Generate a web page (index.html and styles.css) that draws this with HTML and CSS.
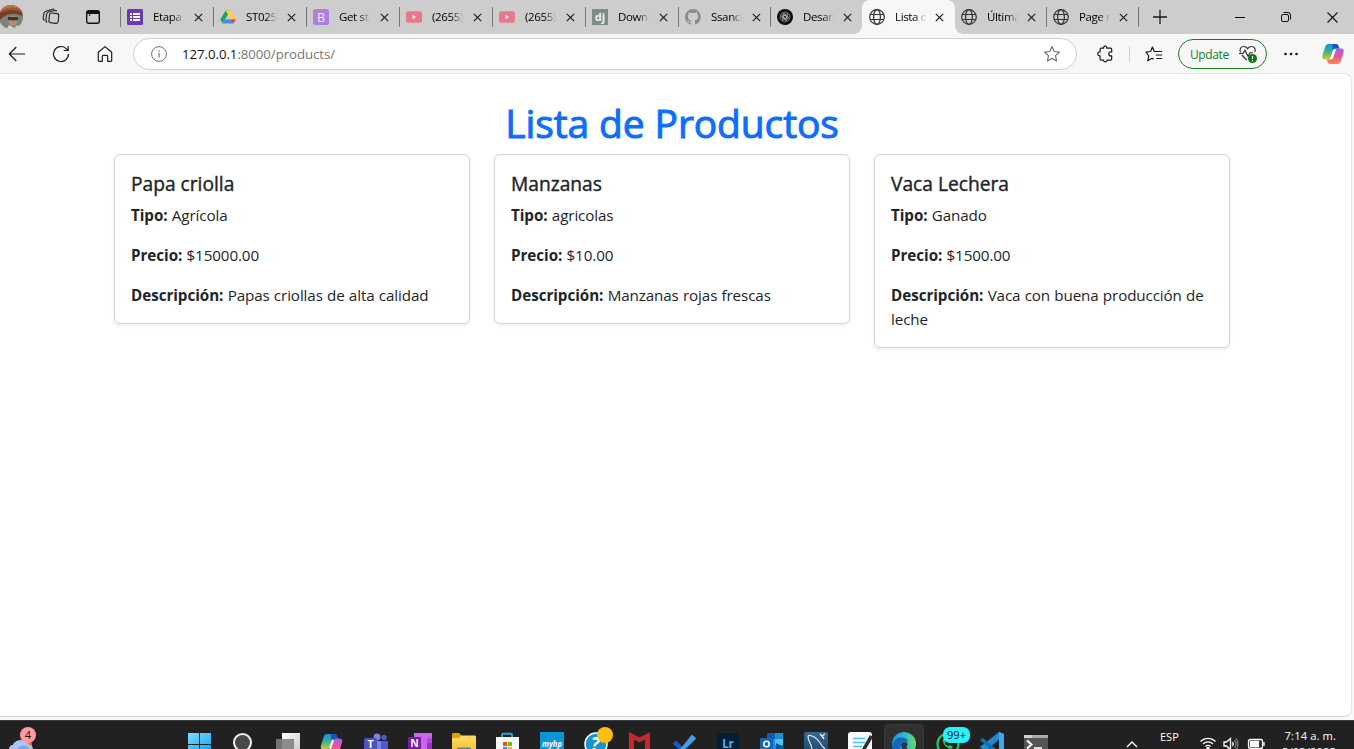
FILE: index.html
```html
<!DOCTYPE html>
<html lang="es">
<head>
<meta charset="utf-8">
<title>Lista de Productos</title>
<link rel="stylesheet" href="styles.css">
</head>
<body>
<svg class="defs" width="0" height="0" aria-hidden="true">
  <defs>
    <linearGradient id="cpA" x1="0" y1="0" x2="0" y2="1"><stop offset="0" stop-color="#1b8de6"/><stop offset=".5" stop-color="#35b58b"/><stop offset="1" stop-color="#f0c020"/></linearGradient>
    <linearGradient id="cpB" x1="0" y1="0" x2="0" y2="1"><stop offset="0" stop-color="#a65bea"/><stop offset=".5" stop-color="#e4559c"/><stop offset="1" stop-color="#ff8a4c"/></linearGradient>
    <linearGradient id="win" x1="0" y1="0" x2="1" y2="1"><stop offset="0" stop-color="#7fdcff"/><stop offset="1" stop-color="#19a5f2"/></linearGradient>
    <linearGradient id="edge" x1="0" y1="0" x2="1" y2="0"><stop offset="0" stop-color="#1b8fe0"/><stop offset=".5" stop-color="#2cb8d8"/><stop offset="1" stop-color="#69dc5c"/></linearGradient>
    <linearGradient id="tv" x1="0" y1="0" x2="1" y2="1"><stop offset="0" stop-color="#fff"/><stop offset="1" stop-color="#ccc"/></linearGradient>
    <linearGradient id="fold" x1="0" y1="0" x2="0" y2="1"><stop offset="0" stop-color="#ffdc6e"/><stop offset="1" stop-color="#fcc22e"/></linearGradient>
    <linearGradient id="sql" x1="0" y1="0" x2="0" y2="1"><stop offset="0" stop-color="#37688f"/><stop offset="1" stop-color="#1d4466"/></linearGradient>
    <clipPath id="face"><circle cx="11" cy="17" r="12"/></clipPath>
    <symbol id="x" viewBox="0 0 10 10"><path d="M.9.9l8.2 8.2M9.1.9L.9 9.1" stroke="#1b1b1b" stroke-width="1.3" fill="none"/></symbol>
    <symbol id="globe" viewBox="0 0 16 16"><g fill="none" stroke="#333" stroke-width="1.2"><circle cx="8" cy="8" r="7.3"/><ellipse cx="8" cy="8" rx="3.4" ry="7.3"/><path d="M1.3 5.5h13.4M1.3 10.5h13.4"/></g></symbol>
    <symbol id="yt" viewBox="0 0 16 16"><rect y="2.2" width="16" height="11.6" rx="2.6" fill="#e6798c"/><path d="M6.4 5.7v4.6l4-2.3z" fill="#f7e4e7"/></symbol>
    <symbol id="copilot" viewBox="0 0 24 22">
      <path d="M7.6 1h7.2c1.6 0 2.4 1 2.8 2.4l.7 2.2h-3.6c-1.7 0-2.5 1-3 2.6l-2 6.4c-.5 1.4-1.2 2-2.6 2H4.200C1.600 16.600.7 15 1.500 12.200L4 4.200C4.700 2 5.700 1 7.600 1z" fill="url(#cpA)"/>
      <path d="M11.500 1h3.300c1.600 0 2.400 1 2.800 2.400l.7 2.200h-3.600c-1.500 0-2.300.8-2.900 2.100z" fill="#1651c4"/>
      <path d="M16.400 21H9.200c-1.600 0-2.400-1-2.800-2.400l-.7-2.200h3.600c1.700 0 2.500-1 3-2.600l2-6.400c.5-1.400 1.200-2 2.600-2h2.900c2.600 0 3.500 1.600 2.700 4.400L20 17.800c-.7 2.200-1.700 3.200-3.600 3.200z" fill="url(#cpB)"/>
      <path d="M13.700 6.600L10.300 15.800" stroke="#fff" stroke-width="2.600" opacity=".9"/>
    </symbol>
  </defs>
</svg>

<header class="tabstrip">
  <div class="strip-tools">
    <svg class="avatar" width="24" height="34" viewBox="0 0 24 34"><g clip-path="url(#face)"><path d="M-1 4h25v26H-1z" fill="#77847a"/><path d="M-1 4h25v9c-7-3-17-1-25 6z" fill="#a2593a"/><path d="M0 13C7 9 17 9 23 13l-1 3C15 12 6 13 0 20z" fill="#7a3d26"/><path d="M2 7c6-3 12-3 18 1l-1 1C13 6 7 7 2 10z" fill="#bd7350"/><ellipse cx="13" cy="21" rx="4.500" ry="5" fill="#b98b77"/><path d="M8 17h10v3l-4 .5-6-.5z" fill="#44332c"/><path d="M6 30l3-5 5 3 4-3 4 6z" fill="#d7d9d5"/></g></svg>
    <svg class="workspaces" width="18" height="18" viewBox="0 0 18 18" fill="none" stroke="#202020" stroke-width="1.100"><rect x="7.200" y="5.300" width="9.300" height="9.800" rx="2" transform="rotate(6 12 10)"/><path d="M5.200 14.600C4 13.800 3.700 13 3.900 11.500l.7-5c.2-1.500.9-2.300 2.300-2.700L13 2.500c1-.2 1.500.1 1.800.8M2.600 12.500C1.500 12 1 11.200 1.200 10l.6-4.200c.2-1.400.9-2.200 2.200-2.500L10.300 1.200c.9-.3 1.500-.1 1.900.5"/></svg>
    <svg class="vtabs" width="16" height="16" viewBox="0 0 16 16"><rect x="1.700" y="1.700" width="12.600" height="12.600" rx="2" fill="none" stroke="#111" stroke-width="1.400"/><path d="M1.500 2h13v3h-13z" fill="#111"/><path d="M4.700 5v2" stroke="#111"/></svg>
  </div>
  <nav class="tabs">
    <div class="tab"><svg class="fav" viewBox="0 0 16 16"><rect width="16" height="16" rx="1.500" fill="#673ab7"/><path d="M3 4h2v2H3zm3 0h7v2H6zM3 7h2v2H3zm3 0h7v2H6zM3 10h2v2H3zm3 0h7v2H6z" fill="#fff"/></svg><span class="tab-name">Etapa</span><svg class="close"><use href="#x"/></svg></div>
    <div class="tab"><svg class="fav" viewBox="0 0 16 16"><path d="M5.600 1.500h4.800L5.300 10l-2.800 4.500L.3 10.500z" fill="#1fa463"/><path d="M5.600 1.500h4.800l5.300 9h-4.900z" fill="#ffcf3f"/><path d="M2.600 14.500l2.500-4h10.600l-2.400 4z" fill="#4688f4"/><path d="M13.300 14.500l2.400-4h-4.900z" fill="#ea4435"/></svg><span class="tab-name">ST025</span><svg class="close"><use href="#x"/></svg></div>
    <div class="tab"><svg class="fav" viewBox="0 0 16 16"><rect width="16" height="16" rx="2.500" fill="#ae7fe0"/><text class="glyph" x="8" y="12.500" text-anchor="middle" font-size="12.500" fill="#eee">B</text></svg><span class="tab-name">Get sta</span><svg class="close"><use href="#x"/></svg></div>
    <div class="tab"><svg class="fav"><use href="#yt"/></svg><span class="tab-name">(2655)</span><svg class="close"><use href="#x"/></svg></div>
    <div class="tab"><svg class="fav"><use href="#yt"/></svg><span class="tab-name">(2655)</span><svg class="close"><use href="#x"/></svg></div>
    <div class="tab"><svg class="fav" viewBox="0 0 16 16"><rect width="16" height="16" fill="#7d8d86"/><text class="glyph bold" x="8" y="11.500" text-anchor="middle" font-size="11" fill="#f1f1f1">dj</text></svg><span class="tab-name">Downl</span><svg class="close"><use href="#x"/></svg></div>
    <div class="tab"><svg class="fav" viewBox="0 0 16 16"><path d="M8 0a8 8 0 0 0-2.500 15.600c.4.100.5-.2.500-.4v-1.500c-2.200.5-2.700-1-2.700-1-.4-.9-.9-1.200-.9-1.200-.7-.5.100-.5.100-.5.800.1 1.200.8 1.200.8.700 1.300 1.900.9 2.300.7.100-.5.300-.9.500-1.100-1.800-.2-3.600-.9-3.600-4 0-.9.300-1.600.8-2.100-.1-.2-.4-1 .1-2.100 0 0 .7-.2 2.200.8a7.500 7.500 0 0 1 4 0c1.500-1 2.200-.8 2.200-.8.4 1.100.2 1.900.1 2.100.5.600.8 1.300.8 2.100 0 3.100-1.900 3.800-3.700 4 .3.300.6.800.6 1.500v2.200c0 .2.100.5.500.4A8 8 0 0 0 8 0z" fill="#8a8a8a"/></svg><span class="tab-name">Ssancl</span><svg class="close"><use href="#x"/></svg></div>
    <div class="tab short"><svg class="fav" viewBox="0 0 16 16"><circle cx="8" cy="8" r="8" fill="#0b0b0b"/><g fill="none" stroke="#bbb" stroke-width=".6"><rect x="6.200" y="3" width="4.500" height="6.500" rx="2.200"/><rect x="6.200" y="3" width="4.500" height="6.500" rx="2.200" transform="rotate(60 8 8)"/><rect x="6.200" y="3" width="4.500" height="6.500" rx="2.200" transform="rotate(120 8 8)"/><rect x="6.200" y="3" width="4.500" height="6.500" rx="2.200" transform="rotate(180 8 8)"/><rect x="6.200" y="3" width="4.500" height="6.500" rx="2.200" transform="rotate(240 8 8)"/><rect x="6.200" y="3" width="4.500" height="6.500" rx="2.200" transform="rotate(300 8 8)"/></g></svg><span class="tab-name">Desarr</span><svg class="close"><use href="#x"/></svg></div>
    <div class="tab short active"><svg class="fav"><use href="#globe"/></svg><span class="tab-name">Lista d</span><svg class="close"><use href="#x"/></svg></div>
    <div class="tab bare"><svg class="fav"><use href="#globe"/></svg><span class="tab-name">Última</span><svg class="close"><use href="#x"/></svg></div>
    <div class="tab short"><svg class="fav"><use href="#globe"/></svg><span class="tab-name">Page n</span><svg class="close"><use href="#x"/></svg></div>
  </nav>
  <div class="strip-end">
    <svg width="14" height="14" viewBox="0 0 14 14"><path d="M7 0v14M0 7h14" stroke="#1b1b1b" stroke-width="1.300"/></svg>
    <div class="window-buttons">
      <svg width="10" height="10" viewBox="0 0 10 10"><path d="M0 5.500h10" stroke="#111"/></svg>
      <svg width="10" height="10" viewBox="0 0 10 10" fill="none" stroke="#111"><rect x=".5" y="2.500" width="7" height="7" rx="1.500"/><path d="M2.500.5H7A2.500 2.500 0 0 1 9.500 3v4.500"/></svg>
      <svg width="11" height="11" viewBox="0 0 11 11"><path d="M.5.5l10 10M10.500.5l-10 10" stroke="#111" stroke-width="1.100"/></svg>
    </div>
  </div>
</header>

<div class="toolbar">
  <div class="nav-buttons">
    <svg class="ico" viewBox="0 0 20 20"><path d="M18 10H2.500M9.300 3L2.300 10l7 7"/></svg>
    <svg class="ico" viewBox="0 0 20 20"><path d="M17.500 10a7.500 7.500 0 1 1-2.300-5.400L17 6.300M17.200 2v4.500h-4.500"/></svg>
    <svg class="ico" viewBox="0 0 20 20"><path d="M3.300 8.200L10 2.600l6.700 5.600v8.300a.8.800 0 0 1-.8.800h-3.200v-5a1 1 0 0 0-1-1H8.300a1 1 0 0 0-1 1v5H4.100a.8.800 0 0 1-.8-.8z"/></svg>
  </div>
  <div class="address">
    <svg class="info" width="16" height="16" viewBox="0 0 16 16" fill="none" stroke="#707070"><circle cx="8" cy="8" r="7.400"/><path d="M8 7v4.500M8 4.200v1.500" stroke-width="1.200"/></svg>
    <span class="url"><span class="host">127.0.0.1</span>:8000/products/</span>
    <svg class="star" width="18" height="18" viewBox="0 0 18 18"><path d="M9 1.600l2.200 4.900 5.300.6-4 3.600 1.100 5.300L9 13.400 4.400 16l1.100-5.300-4-3.600 5.300-.6z" fill="none" stroke="#6a6a6a" stroke-width="1.100" stroke-linejoin="round"/></svg>
  </div>
  <svg class="ico puzzle" viewBox="0 0 20 20"><path d="M6.200 4.200h2.400c-.1-1.300.6-2 1.600-2s1.700.7 1.600 2h3.700c.7 0 1.200.5 1.200 1.200v2.500h-.9a1.900 1.900 0 0 0 0 4h.9v3c0 .7-.5 1.200-1.200 1.200h-3.500c.1 1.100-.7 1.700-1.700 1.700s-1.800-.6-1.700-1.700H6.200c-.7 0-1.100-.5-1.100-1.200v-3c-1.500.1-2.300-.8-2.300-2s.8-2.100 2.300-2V5.400c0-.7.400-1.200 1.100-1.200z"/></svg>
  <span class="divider"></span>
  <svg class="ico favs" viewBox="0 0 20 20"><path d="M9.700 15.300L8 14.300l-4.300 2.500 1.100-4.800L2 8.100l4.600-.6L8.400 3l1.900 4.500h7.900M11.700 11h6.500M12.200 14.500h6"/></svg>
  <div class="update"><span>Update</span>
    <svg width="20" height="20" viewBox="0 0 20 20"><path d="M2.500 8.500C1 5 3 2.500 5.600 2.500c2 0 3.300 1.200 4 2.200.7-1 2-2.200 4-2.200 2.600 0 4.400 2.500 3.200 5.500M3.800 11l5 5M1 9.500h4l2-3.300 3 6 2-3.500h3" fill="none" stroke="#24342b" stroke-width="1.150"/><circle cx="14.500" cy="14.500" r="4.500" fill="#0d7514"/><path d="M14.500 12v3M14.500 16v1.200" stroke="#fff" stroke-width="1.200"/></svg>
  </div>
  <svg class="dots" width="20" height="20" viewBox="0 0 20 20"><circle cx="4.500" cy="10" r="1.350"/><circle cx="10" cy="10" r="1.350"/><circle cx="15.500" cy="10" r="1.350"/></svg>
  <svg class="copilot" width="24" height="22"><use href="#copilot"/></svg>
</div>

<div class="viewport">
  <main class="page">
    <h1>Lista de Productos</h1>
    <section class="cards">
      <article class="card">
        <h2>Papa criolla</h2>
        <p><b>Tipo:</b> Agrícola</p>
        <p><b>Precio:</b> $15000.00</p>
        <p><b>Descripción:</b> Papas criollas de alta calidad</p>
      </article>
      <article class="card">
        <h2>Manzanas</h2>
        <p><b>Tipo:</b> agricolas</p>
        <p><b>Precio:</b> $10.00</p>
        <p><b>Descripción:</b> Manzanas rojas frescas</p>
      </article>
      <article class="card">
        <h2>Vaca Lechera</h2>
        <p><b>Tipo:</b> Ganado</p>
        <p><b>Precio:</b> $1500.00</p>
        <p><b>Descripción:</b> Vaca con buena producción de leche</p>
      </article>
    </section>
  </main>
</div>

<footer class="taskbar">
  <svg class="weather" width="44" height="29" viewBox="0 0 44 29"><circle cx="26" cy="25" r="6" fill="#f07818"/><path d="M9 30c0-4 2-5 4-5 1-5 12-8 16 0 3 0 4 2 4 5z" fill="#a9c5f2"/><path d="M17 30c1-5 10-6 12-2l1 2z" fill="#7fa5e4"/><circle cx="28" cy="15" r="8" fill="#ff99a4"/><text class="glyph" x="28" y="19" text-anchor="middle" font-size="11" fill="#111">4</text></svg>
  <div class="apps">
    <svg class="app" viewBox="0 0 44 29"><path d="M11 13h11v11H11zM23 13h11v11H23zM11 25h11v4H11zM23 25h11v4H23z" fill="url(#win)"/></svg>
    <svg class="app" viewBox="0 0 44 29"><circle cx="21.500" cy="22.500" r="8.500" fill="#484848" stroke="#f2f2f2" stroke-width="2"/></svg>
    <svg class="app" viewBox="0 0 44 29"><path d="M17 13h18v16H17z" fill="url(#tv)"/><path d="M11 19h18v10H11z" fill="#808080" opacity=".88"/></svg>
    <svg class="app" viewBox="0 0 44 29"><use href="#copilot" x="10.500" y="13" width="24" height="22"/></svg>
    <svg class="app" viewBox="0 0 44 29"><circle cx="24" cy="17" r="3.500" fill="#7b83eb"/><circle cx="31" cy="17.500" r="2.700" fill="#5059c9"/><path d="M16 21h12v8H16z" fill="#7b83eb"/><path d="M28 21h7v8h-7z" fill="#5059c9"/><rect x="11" y="18" width="13" height="13" rx="1.500" fill="#4b53bc"/><text class="glyph bold" x="17.500" y="27.500" text-anchor="middle" font-size="10.500" fill="#fff">T</text></svg>
    <svg class="app" viewBox="0 0 44 29"><path d="M17 13h18v16H17z" fill="#ca64ea"/><path d="M30 18h5v5h-5z" fill="#ae4bd5"/><path d="M30 23h5v6h-5z" fill="#9332bf"/><rect x="11" y="17" width="13" height="14" rx="1.200" fill="#7719aa"/><text class="glyph bold" x="17.500" y="27" text-anchor="middle" font-size="10.500" fill="#fff">N</text></svg>
    <svg class="app" viewBox="0 0 44 29"><path d="M11 14.500c0-1 .5-1.500 1.500-1.500H18l2.500 2.500V18H11z" fill="#e0a008"/><path d="M11 18h7l2.500-2.500H33.500c1 0 1.500.5 1.500 1.500v12H11z" fill="url(#fold)"/><path d="M16 29c0-1 1-1.500 2-1.500h10c1 0 2 .5 2 1.500z" fill="#218bd1"/></svg>
    <svg class="app" viewBox="0 0 44 29"><path d="M17 19v-4c0-.8.500-1.200 1.200-1.200h7.600c.7 0 1.200.400 1.200 1.200v4" fill="none" stroke="#25a5e8" stroke-width="2"/><path d="M11 17h23v12H11z" fill="#f7f7f7"/><path d="M18 22h4v4h-4z" fill="#f25022"/><path d="M23 22h4v4h-4z" fill="#7fba00"/><path d="M18 27h4v2h-4z" fill="#00a4ef"/><path d="M23 27h4v2h-4z" fill="#ffb900"/></svg>
    <svg class="app" viewBox="0 0 44 29"><path d="M11 12h24v17H11z" fill="#0c96d5"/><text class="glyph bold" x="23" y="26.500" text-anchor="middle" font-size="8.500" font-style="italic" fill="#fff" textLength="20" lengthAdjust="spacingAndGlyphs">myhp</text></svg>
    <svg class="app" viewBox="0 0 44 29"><circle cx="23" cy="24" r="11" fill="#1593d0" stroke="#fff" stroke-width="1.500"/><text class="glyph bold" x="22" y="31" text-anchor="middle" font-size="19" font-style="italic" fill="#fff">?</text><circle cx="32" cy="15" r="8" fill="#ffbe0f"/></svg>
    <svg class="app" viewBox="0 0 44 29"><path d="M12 12l10.500 5.500L33 12v17h-5V19.500L22.500 22.500 17 19.500V29h-5z" fill="#c8282d"/></svg>
    <svg class="app" viewBox="0 0 44 29"><path d="M15 20.500l8 8-3 3-8.500-8z" fill="#185abd"/><path d="M31 14.500l4.200 4L22.500 31h-5z" fill="#439ee9"/></svg>
    <svg class="app" viewBox="0 0 44 29"><rect x="12" y="13" width="22" height="22" rx="4" fill="#001e36"/><text class="glyph bold" x="23" y="27.500" text-anchor="middle" font-size="11.500" fill="#4ab5f5">Lr</text></svg>
    <svg class="app" viewBox="0 0 44 29"><path d="M18 13h16v16H18z" fill="#1490df"/><path d="M18 13h8v6h-8z" fill="#0b5cad"/><path d="M26 19h8v6h-8z" fill="#50c3f5"/><path d="M27 23l8 4v2h-8z" fill="#0a55a3"/><rect x="11" y="18" width="13" height="13" rx="1.500" fill="#1066b8"/><circle cx="17.500" cy="24" r="2.700" fill="none" stroke="#fff" stroke-width="1.600"/></svg>
    <svg class="app" viewBox="0 0 44 29"><rect x="11" y="12" width="24" height="24" rx="2" fill="url(#sql)"/><path d="M19 29c0-2-1-2-1-4-1-2-3-5-3-8 0-2 2-2 4-1 5 2 8 6 10 10l3 3" fill="none" stroke="#dbe9f3" stroke-width="1.200"/><path d="M27 14l2 2 3-2M29 16l2 3" stroke="#dbe9f3" fill="none" stroke-width="1.500"/></svg>
    <svg class="app" viewBox="0 0 44 29"><rect x="11" y="12" width="24" height="22" rx="3" fill="#fafafa"/><path d="M16 18.500h12M16 22.500h12M16 26.500h9" stroke="#45c5e8" stroke-width="1.400"/><path d="M33 15l3 2-7 12h-4z" fill="#2e2e2e"/></svg>
    <svg class="app" viewBox="0 0 44 29"><rect x="3.500" y="4.500" width="39" height="36" rx="4" fill="#303030" stroke="#3b3b3b"/><circle cx="23" cy="24" r="12" fill="url(#edge)"/><path d="M11.200 26c1-6 5-8.500 9-8.500 5 0 7 3 7 5-2-2-7-1.500-7.500 2.500l-.3 4H12z" fill="#1566b8"/><path d="M20 25c.5-3 3-3.500 5-3 2 1 2 3 1 4s0 3 1 3h-6z" fill="#26384a"/></svg>
    <svg class="app" viewBox="0 0 44 29"><circle cx="23" cy="24" r="10.500" fill="#202020" stroke="#25c866" stroke-width="2.200"/><path d="M18 19c-1 4 3 9 8 10l2-2-3-2-2 1c-2-1-3-2-3-4l1-1-1-3z" fill="#25c866"/><rect x="18" y="7" width="27" height="16" rx="7" fill="#29f2ff"/><text class="glyph" x="31.500" y="19" text-anchor="middle" font-size="11" fill="#111">99+</text></svg>
    <svg class="app" viewBox="0 0 44 29"><path d="M30 12l5 2v15h-5v-9.500L18 30h-4l-3-3z" fill="#2489ca"/><path d="M11 20l3-2 13 11h-6z" fill="#1070b3"/><path d="M30 12l5 2v15h-5z" fill="#3ba8ef"/></svg>
    <svg class="app" viewBox="0 0 44 29"><path d="M11 15h24v14H11z" fill="#555"/><path d="M11 15h24v3H11z" fill="#aaa"/><path d="M11 15h8v3h-8z" fill="#d0d0d0"/><path d="M14 20.500l4.500 4-4.500 4" fill="none" stroke="#fff" stroke-width="2"/><path d="M21 28h8" stroke="#ddd" stroke-width="2"/></svg>
  </div>
  <div class="tray">
    <svg class="chevron" width="12" height="8" viewBox="0 0 12 8"><path d="M1 7l5-5 5 5" fill="none" stroke="#fff" stroke-width="1.400"/></svg>
    <span class="lang">ESP</span>
    <svg class="status" width="60" height="29" viewBox="0 0 60 29" fill="none" stroke="#fff" stroke-width="1.300"><path d="M.5 21.500a10.500 10.500 0 0 1 15 0M3 24a7 7 0 0 1 10 0M5.500 26.500a3.500 3.500 0 0 1 5 0"/><circle cx="8" cy="28.500" r="1" fill="#fff"/><path d="M24 22h2.500l4-3.500v11l-4-3.500H24z"/><path d="M32.500 22q1.500 2 0 4"/><path d="M34.500 20q3 4 0 8M36 18q4 6 0 12" stroke="#777"/><path d="M60 19.500h-9.500q-2 0-2 2v5q0 2 2 2H60"/><path d="M50.500 21.500h8v5h-8z" fill="#fff"/></svg>
    <svg class="battery-tip" width="5" height="29" viewBox="0 0 5 29"><path d="M0 19.500h1q1.500 0 1.500 2v5q0 2-1.500 2H0M4 22v4" fill="none" stroke="#fff" stroke-width="1.300"/></svg>
    <div class="clock"><span>7:14 a. m.</span><span>5/03/2025</span></div>
  </div>
</footer>
</body>
</html>
```
FILE: styles.css
```css
* { box-sizing: border-box; }
body {
  margin: 0;
  width: 1354px;
  height: 749px;
  overflow: hidden;
  display: flex;
  flex-direction: column;
  background: #f7f7f7;
  font-family: "Open Sans", "Noto Sans", sans-serif;
  color: #212529;
}
svg { display: block; flex: none; }
.defs { position: absolute; }
.glyph { font-family: "Open Sans", "Noto Sans", sans-serif; }
.bold { font-weight: 700; }

.tabstrip { height: 34px; flex: none; display: flex; background: #cdcdcd; }
.strip-tools { width: 120px; display: flex; align-items: center; }
.workspaces { margin-left: 18px; }
.vtabs { margin-left: 25px; }
.tabs { display: grid; grid-template-columns: repeat(6, 93px) 92px 92px 93px 91px 93px; }
.tab {
  min-width: 0;
  display: flex;
  align-items: center;
  padding-left: 7px;
  background: linear-gradient(#777, #777) 0 7px / 1px 20px no-repeat;
}
.tab:last-child {
  background: linear-gradient(#777, #777) 0 7px / 1px 20px no-repeat,
              linear-gradient(#777, #777) 100% 7px / 1px 20px no-repeat;
}
.tab.bare { background: none; padding-left: 6px; }
.fav { width: 16px; height: 16px; }
.tab-name {
  width: 33px;
  margin-left: 10px;
  overflow: hidden;
  white-space: nowrap;
  font-size: 11.5px;
  line-height: 18px;
  letter-spacing: -0.35px;
  color: #000;
  -webkit-mask-image: linear-gradient(90deg, #000 60%, transparent 95%);
  mask-image: linear-gradient(90deg, #000 60%, transparent 95%);
}
.close { width: 9px; height: 9px; margin-left: 8px; }
.tab.short .close, .tab.bare .close { margin-left: 7px; }
.tab.active { position: relative; background: #f7f7f7; border-radius: 8px 8px 0 0; }
.tab.active::before, .tab.active::after {
  content: "";
  position: absolute;
  bottom: 0;
  width: 8px;
  height: 8px;
}
.tab.active::before { left: -8px; background: radial-gradient(circle at 0 0, #cdcdcd 7.5px, #f7f7f7 8px); }
.tab.active::after { right: -8px; background: radial-gradient(circle at 100% 0, #cdcdcd 7.5px, #f7f7f7 8px); }
.strip-end { flex: 1; display: flex; align-items: center; justify-content: space-between; padding: 0 16px 0 14px; }
.window-buttons { display: flex; gap: 36px; align-items: center; }

.toolbar { height: 39px; flex: none; display: flex; align-items: center; padding: 1px 0 0 7px; }
.nav-buttons { display: flex; gap: 24px; }
.ico { width: 20px; height: 20px; fill: none; stroke: #1b1b1b; stroke-width: 1.2; stroke-linejoin: round; }
.address {
  width: 944px;
  height: 32px;
  margin-left: 18px;
  padding: 0 15px 0 17px;
  display: flex;
  align-items: center;
  background: #fff;
  border: 1px solid #cfcfcf;
  border-radius: 16px;
}
.url { margin-left: 15px; flex: 1; font-size: 13.2px; letter-spacing: -0.03px; color: #757575; }
.host { color: #111; }
.puzzle { margin-left: 18px; }
.divider { width: 1px; height: 16px; margin: 0 14px; background: #cfcfcf; }
.update {
  width: 89px;
  height: 30px;
  margin-left: 14px;
  padding: 0 8px 0 11px;
  display: flex;
  align-items: center;
  justify-content: space-between;
  border: 1px solid #15801c;
  border-radius: 15px;
  font-size: 12px;
  color: #15801c;
  letter-spacing: -0.4px;
}
.dots { margin-left: 14px; fill: #1b1b1b; }
.copilot { margin-left: 20px; }

.viewport {
  width: 1352px;
  height: 644px;
  flex: none;
  background: #fff;
  border: 1px solid #e4e4e4;
  border-left: 0;
  border-bottom-color: #d4d4d4;
  border-radius: 0 8px 8px 0;
}
.page { width: 1140px; margin-left: 102px; padding: 25px 12px 0; }
h1 {
  margin: 0 0 7px;
  text-align: center;
  font-size: 39px;
  line-height: 48px;
  font-weight: 500;
  letter-spacing: -0.12px;
  -webkit-text-stroke: 1px #0d6efd;
  color: #0d6efd;
}
.cards { display: grid; grid-template-columns: repeat(3, 356px); gap: 24px; align-items: start; }
.card {
  padding: 16px;
  border: 1px solid #d3d4d5;
  border-radius: 6px;
  background: #fff;
  box-shadow: 0 2px 4px rgba(0, 0, 0, .075);
}
.card h2 {
  margin: 0 0 7px;
  padding-top: 1px;
  font-size: 19.2px;
  line-height: 24px;
  font-weight: 500;
  -webkit-text-stroke: 0.4px #212529;
}
.card p { margin: 0 0 16px; font-size: 15.2px; line-height: 24px; letter-spacing: -0.11px; word-spacing: 0.4px; }
.card p:last-child { margin-bottom: 0; }
.card b { font-weight: 700; letter-spacing: -0.04px; }

.taskbar {
  height: 29px;
  margin-top: 3px;
  flex: none;
  overflow: hidden;
  display: flex;
  background: #212121;
  border-top: 1px solid #3a3d3e;
}
.taskbar > *, .tray { margin-top: -1px; }
.apps { display: flex; margin-left: 133px; }
.app { width: 44px; height: 29px; overflow: visible; }
.tray { display: flex; color: #fff; font-size: 11px; margin-left: 69px; }
.chevron { margin-top: 20px; }
.lang { width: 20px; margin: 9px 0 0 22px; line-height: 16px; }
.status { margin-left: 20px; }
.clock {
  width: 71px;
  display: flex;
  flex-direction: column;
  align-items: flex-end;
  margin-top: 8px;
  font-size: 11.2px;
  line-height: 16px;
  letter-spacing: 0.1px;
  white-space: nowrap;
}
```
